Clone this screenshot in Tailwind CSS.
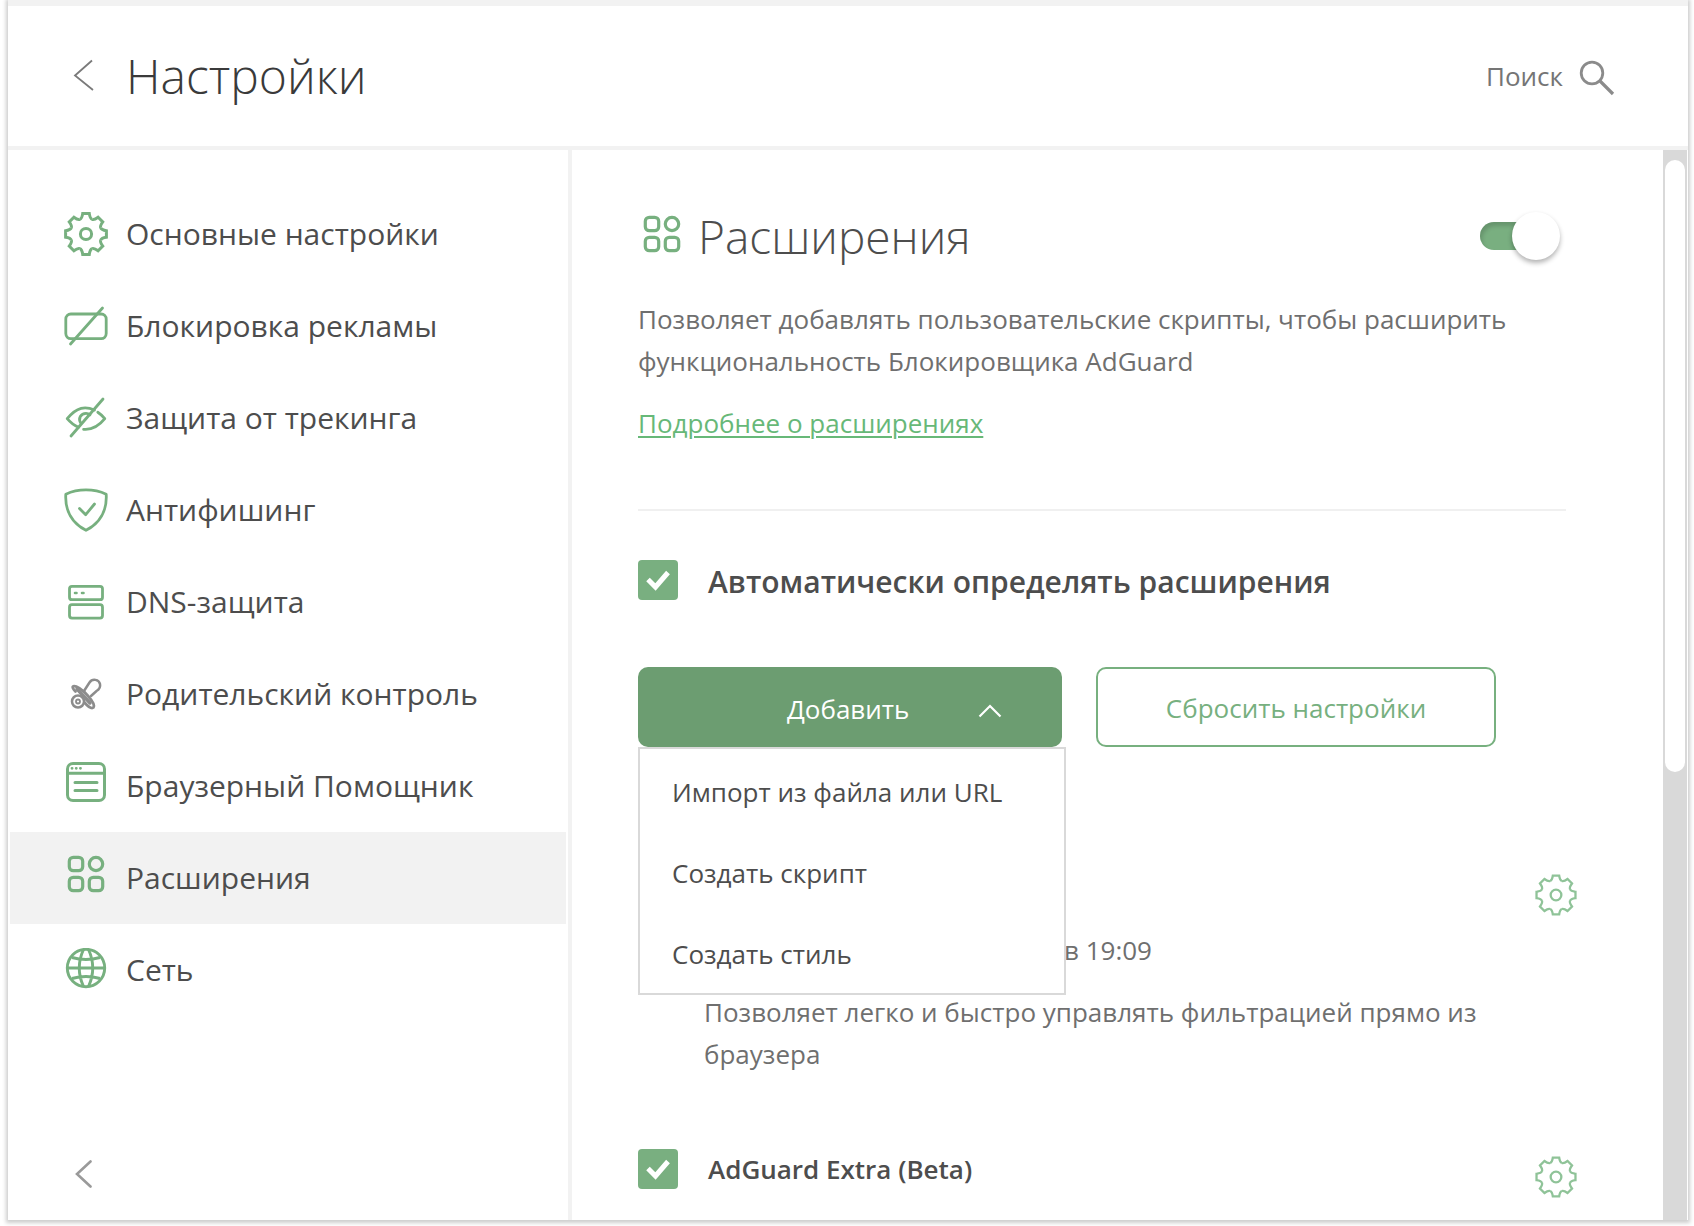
<!DOCTYPE html>
<html lang="ru">
<head>
<meta charset="utf-8">
<meta name="viewport" content="width=device-width, initial-scale=1">
<title>Настройки</title>
<script src="https://cdn.jsdelivr.net/npm/@tailwindcss/browser@4"></script>
</head>
<body class="flex h-screen flex-col overflow-hidden bg-white pr-[6px] pb-[6px] pl-2 font-['Segoe_UI','Open_Sans',sans-serif] text-[#4d4d4d]">

<svg class="hidden" aria-hidden="true">
  <defs>
    <path id="tooth" d="M-6.1 -14.7C-4.6 -15.3 -3.9 -16.4 -3.3 -20.4H3.3C3.9 -16.4 4.6 -15.3 6.1 -14.7"/>
    <symbol id="gear" viewBox="-22 -22 44 44">
      <use href="#tooth"/><use href="#tooth" transform="rotate(45)"/><use href="#tooth" transform="rotate(90)"/><use href="#tooth" transform="rotate(135)"/>
      <use href="#tooth" transform="rotate(180)"/><use href="#tooth" transform="rotate(225)"/><use href="#tooth" transform="rotate(270)"/><use href="#tooth" transform="rotate(315)"/>
      <circle r="5.6"/>
    </symbol>
    <symbol id="tiles" viewBox="0 0 44 44">
      <rect x="5.3" y="5.3" width="13.4" height="13.4" rx="4"/><circle cx="32" cy="12" r="6.7"/>
      <rect x="5.3" y="25.3" width="13.4" height="13.4" rx="4"/><rect x="25.3" y="25.3" width="13.4" height="13.4" rx="4"/>
    </symbol>
  </defs>
</svg>

<div class="flex min-h-0 flex-1 flex-col border-t-6 border-[#f2f2f2] bg-white shadow-[0_1px_4px_2px_rgba(0,0,0,0.2)]">
  <header class="flex h-36 shrink-0 items-center border-b-4 border-[#f2f2f2] pr-[73px] pl-[62px]">
    <button type="button" aria-label="Назад" class="mr-8">
      <svg class="size-6 overflow-visible" viewBox="0 0 24 24" fill="none" stroke="#7a7a7a" stroke-width="1.8"><path d="M22 -3.500L5 11.500L23 26"/></svg>
    </button>
    <h1 class="text-[48px] leading-[60px] font-light text-[#3a3a3a]">Настройки</h1>
    <button type="button" class="ml-auto flex items-center gap-4 text-[26px] leading-[42px] text-[#757575]">
      <span>Поиск</span>
      <svg class="mt-1 size-9" viewBox="0 0 36 36" fill="none" stroke="#8b8b8b" stroke-width="2.8"><circle cx="13" cy="13" r="10.8"/><path d="M21 21L34 34" stroke-width="3.2"/></svg>
    </button>
  </header>

  <div class="flex min-h-0 flex-1">
    <aside class="flex w-[564px] shrink-0 flex-col border-r-4 border-[#f2f2f2] px-0.5 pt-[38px]">
      <nav class="flex flex-col text-[30px] leading-[46px]">
        <a href="#" class="flex h-23 items-center gap-[18px] pl-[54px]">
          <svg class="size-11" fill="none" stroke="#77b07f" stroke-width="3"><use href="#gear"/></svg>Основные настройки</a>
        <a href="#" class="flex h-23 items-center gap-[18px] pl-[54px]">
          <svg class="size-11" viewBox="0 0 44 44" fill="none" stroke="#77b07f" stroke-width="2.8" stroke-linecap="round"><rect x="1.8" y="10" width="40.4" height="24.6" rx="5"/><path d="M6.5 40L38.5 4"/></svg>Блокировка рекламы</a>
        <a href="#" class="flex h-23 items-center gap-[18px] pl-[54px]">
          <svg class="size-11" viewBox="0 0 44 44" fill="none" stroke="#77b07f" stroke-width="2.8" stroke-linecap="round" stroke-linejoin="round"><path d="M7 40L39 3"/><path d="M14.500 31.300C9.500 29.300 6 26 3.200 22.700C13 10.500 21.500 10 30.500 14"/><path d="M33.800 16.200C36.800 18.100 39 20.500 40.800 22.700C34.500 30.500 26.500 34 19.600 33.300"/><path d="M17 27.500C13.500 22.500 17 17.300 22 17.300C23.800 17.300 25 17.800 26 18.700"/></svg>Защита от трекинга</a>
        <a href="#" class="flex h-23 items-center gap-[18px] pl-[54px]">
          <svg class="size-11" viewBox="0 0 44 44" fill="none" stroke="#77b07f" stroke-width="2.8" stroke-linecap="round" stroke-linejoin="round"><path d="M1.800 6.300C14 .500 30 .500 42.200 6.300C43.200 23 35.500 35.500 22 42.300C8.500 35.500 .800 23 1.800 6.300Z"/><path d="M15.500 20.500L21.700 26.700L30.500 16"/></svg>Антифишинг</a>
        <a href="#" class="flex h-23 items-center gap-[18px] pl-[54px]">
          <svg class="size-11" viewBox="0 0 44 44" fill="none" stroke="#77b07f" stroke-width="2.8" stroke-linecap="round"><rect x="5.500" y="6.300" width="33" height="13.400" rx="2.500"/><rect x="5.500" y="24.700" width="33" height="13.400" rx="2.500"/><path d="M11 13H12.500M18 13H19.500" stroke-width="2.600"/></svg>DNS-защита</a>
        <a href="#" class="flex h-23 items-center gap-[18px] pl-[54px]">
          <svg class="size-11" viewBox="0 0 44 44" fill="none" stroke="#8c8c8c" stroke-width="2.500" stroke-linecap="round"><path d="M20 19L25.500 10.500C28.500 6 35 7.500 36 12C36.600 15 35 17.500 32.500 19L27 24"/><path d="M11.500 19.500C9.500 17.500 8.200 16 8.800 14.700C11 12.500 19 18 24 24C28.500 29 31 33.500 29.500 35.500C27.500 37 23.500 34 20.500 30.500" stroke-width="2.800"/><path d="M13 17L26 31" stroke-width="3.400"/><circle cx="14" cy="29.500" r="6"/><circle cx="14" cy="29.500" r="2" stroke-width="1.800"/></svg>Родительский контроль</a>
        <a href="#" class="flex h-23 items-center gap-[18px] pl-[54px]">
          <svg class="size-11 overflow-visible" viewBox="0 -4 44 44" fill="none" stroke="#77b07f" stroke-width="3" stroke-linecap="round"><rect x="3.500" y="-4.500" width="37" height="37" rx="5.500"/><path d="M4 5.200H40M11 14.500H33M11 22.500H33"/><path d="M8 .300H8.100M12.200 .300H12.300M16.400 .300H16.500" stroke-width="2.800"/></svg>Браузерный Помощник</a>
        <a href="#" aria-current="page" class="flex h-23 items-center gap-[18px] bg-[#f2f2f2] pl-[54px]">
          <svg class="mb-2 size-11" fill="none" stroke="#77b07f" stroke-width="3.200"><use href="#tiles"/></svg>Расширения</a>
        <a href="#" class="flex h-23 items-center gap-[18px] pl-[54px]">
          <svg class="size-11" viewBox="0 2 44 44" fill="none" stroke="#77b07f" stroke-width="2.900"><circle cx="22" cy="22" r="18.700"/><path d="M3.500 22H40.500M8 11.500Q22 15.500 36 11.500M8 32.500Q22 28.500 36 32.500M19.500 3.500Q11 22 19.500 40.500M24.500 3.500Q33 22 24.500 40.500"/></svg>Сеть</a>
      </nav>
      <button type="button" aria-label="Свернуть меню" class="mt-auto mb-8 ml-[64px] self-start">
        <svg class="h-7 w-5" viewBox="0 0 20 28" fill="none" stroke="#9a9a9a" stroke-width="2.600" stroke-linecap="round"><path d="M16.500 1.500L3 14L16.500 26.500"/></svg>
      </button>
    </aside>

    <main class="min-w-0 flex-1 overflow-hidden pt-[52px] pr-[97px] pl-[66px]">
      <div class="flex h-[68px] items-center">
        <svg class="mr-3.5 mb-1 ml-0.5 size-11" fill="none" stroke="#77b07f" stroke-width="3.200"><use href="#tiles"/></svg>
        <h2 id="ext-title" class="text-[46px] leading-[60px] font-light">Расширения</h2>
        <label class="relative mr-1.5 ml-auto flex h-12 w-20 items-center">
          <input type="checkbox" role="switch" checked aria-labelledby="ext-title" class="h-7 w-[70px] appearance-none rounded-full bg-[#79af80] shadow-[inset_2px_4px_4px_rgba(0,0,0,0.16)]">
          <span class="absolute right-0 size-12 rounded-full bg-white shadow-[0_3px_5px_rgba(0,0,0,0.3)]"></span>
        </label>
      </div>
      <p class="mt-7 text-[26px] leading-[42px] text-[#6f6f6f]">Позволяет добавлять пользовательские скрипты, чтобы расширить функциональность Блокировщика AdGuard</p>
      <a href="#" class="mt-5 block w-fit text-[26px] leading-[42px] text-[#67b878] underline decoration-2 underline-offset-3">Подробнее о расширениях</a>
      <hr class="mt-[65px] border-t-2 border-[#f0f0f0]">

      <div class="mt-[49px] flex h-10 items-center gap-[30px]">
        <span class="grid size-10 shrink-0">
          <input id="auto" type="checkbox" checked class="col-start-1 row-start-1 size-10 appearance-none rounded-[4px] bg-[#79af80]">
          <svg class="pointer-events-none col-start-1 row-start-1 size-10" viewBox="0 0 40 40" fill="none" stroke="#fff" stroke-width="5"><path d="M10 19.500L17.500 27L30 12.500"/></svg>
        </span>
        <label for="auto" class="pt-1 text-[30px] leading-[44px] font-semibold">Автоматически определять расширения</label>
      </div>

      <div class="mt-[67px] flex gap-[34px]">
        <div class="relative">
          <button type="button" aria-haspopup="menu" aria-expanded="true" class="flex h-20 w-[424px] items-center rounded-[10px] bg-[#6c9d71] pt-1 pl-[149px] text-[26px] leading-[42px] text-white">Добавить
            <svg class="mt-1 mr-[60px] ml-auto h-4 w-6" viewBox="0 0 24 16" fill="none" stroke="#fff" stroke-width="2.200"><path d="M1.500 13.500L12 3L22.500 13.500"/></svg>
          </button>
          <ul role="menu" class="absolute top-20 left-0 z-10 flex h-[248px] w-[428px] flex-col border-2 border-[#d9d9d9] bg-white text-[26px] leading-[42px]">
            <li role="none" class="flex flex-1 items-center pt-1"><button type="button" role="menuitem" class="px-8">Импорт из файла или URL</button></li>
            <li role="none" class="flex flex-1 items-center pt-1"><button type="button" role="menuitem" class="px-8">Создать скрипт</button></li>
            <li role="none" class="flex flex-1 items-center pt-1"><button type="button" role="menuitem" class="px-8">Создать стиль</button></li>
          </ul>
        </div>
        <button type="button" class="h-20 w-[400px] rounded-[10px] border-2 border-[#77b07f] pt-0.5 text-[26px] leading-[42px] text-[#77b07f]">Сбросить настройки</button>
      </div>

      <section class="mt-[126px] pl-[66px]">
        <div class="-mr-3 flex h-11 justify-end">
          <button type="button" aria-label="Настройки расширения" class="grid size-11 place-items-center"><svg class="size-[42px]" fill="none" stroke="#8fc398" stroke-width="2.400"><use href="#gear"/></svg></button>
        </div>
        <p class="mt-3 pl-[360px] text-[26px] leading-[42px] text-[#6f6f6f]">в 19:09</p>
        <p class="mt-5 mr-[60px] text-[26px] leading-[42px] text-[#6f6f6f]">Позволяет легко и быстро управлять фильтрацией прямо из браузера</p>
      </section>

      <section class="-mr-3 mt-16 flex items-center">
        <span class="mr-[30px] grid size-10 shrink-0">
          <input id="extra" type="checkbox" checked class="col-start-1 row-start-1 size-10 appearance-none rounded-[4px] bg-[#79af80]">
          <svg class="pointer-events-none col-start-1 row-start-1 size-10" viewBox="0 0 40 40" fill="none" stroke="#fff" stroke-width="5"><path d="M10 19.500L17.500 27L30 12.500"/></svg>
        </span>
        <label for="extra" class="text-[26px] leading-[42px] font-semibold">AdGuard Extra (Beta)</label>
        <button type="button" aria-label="Настройки расширения" class="mt-4 ml-auto grid size-11 place-items-center"><svg class="size-[42px]" fill="none" stroke="#8fc398" stroke-width="2.400"><use href="#gear"/></svg></button>
      </section>
    </main>

    <div class="mr-px w-6 shrink-0 bg-[#d9d9d9] px-0.5 pt-2.5" aria-hidden="true">
      <div class="h-[57.7%] rounded-full bg-white"></div>
    </div>
  </div>
</div>
</body>
</html>
